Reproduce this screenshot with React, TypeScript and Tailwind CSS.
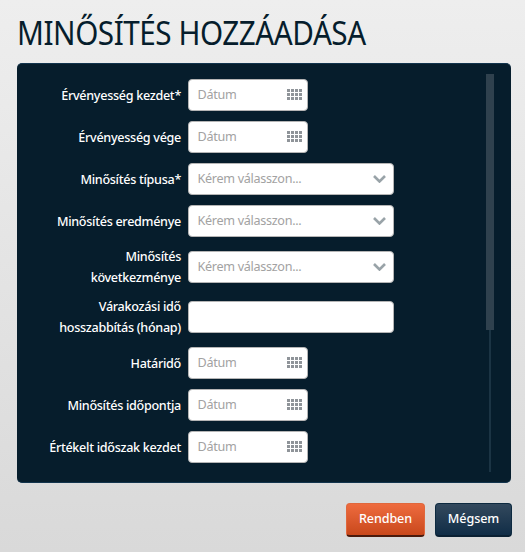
const font = "font-['Noto_Sans','Open_Sans',sans-serif]";

const CalendarGrid = () => (
  <svg width="15" height="12" viewBox="0 0 15 12" className="fill-[#8f9499]">
    {[0, 4, 8].map((y) =>
      [0, 4, 8, 12].map((x) => <rect key={`${x}-${y}`} x={x} y={y} width="3" height="3" />)
    )}
  </svg>
);

const Chevron = () => (
  <svg width="13" height="8" viewBox="0 0 13 8" fill="none" stroke="#99a3a8" strokeWidth="2.6">
    <path d="M1 1 L6.5 6.5 L12 1" />
  </svg>
);

const Row = ({ label, tall, children }: any) => (
  <div className={`flex items-center gap-[7px] ${tall ? "h-[40px]" : "h-[32px]"}`}>
    <label className="w-[164px] shrink-0 text-right text-[12.6px] leading-[21px] font-medium tracking-[-0.3px] text-white">
      {label}
    </label>
    {children}
  </div>
);

const DateField = () => (
  <div className="flex h-[32px] w-[120px] items-center justify-between rounded-[4px] border border-[#b5b5b5] bg-white pl-[8.5px] pr-[5px] text-[12.6px] tracking-[-0.3px] text-[#a2a2a2]">
    Dátum
    <CalendarGrid />
  </div>
);

const SelectField = () => (
  <div className="flex h-[32px] w-[206px] items-center justify-between rounded-[4px] border border-[#b5b5b5] bg-white pl-[8.5px] pr-[7px] text-[12.6px] tracking-[-0.3px] text-[#a2a2a2]">
    Kérem válasszon...
    <Chevron />
  </div>
);

export default function App() {
  return (
    <div className={`${font} h-[552px] w-[525px] overflow-hidden bg-linear-to-b from-[#eeeeee] to-[#d9d9d9]`}>
      <h1 className="origin-left scale-x-[0.898] pt-[13px] pl-[19px] text-[33px] leading-[40px] font-normal tracking-[-0.5px] whitespace-nowrap text-[#061d2c]">
        MINŐSÍTÉS HOZZÁADÁSA
      </h1>

      <div className="relative mx-[17px] mt-[10px] h-[420px] w-[494px] overflow-hidden rounded-[5px] border-t border-b border-[#12344d] bg-[#061d2c]">
        <div className="flex flex-col gap-[10px] pt-[15px]">
          <Row label="Érvényesség kezdet*"><DateField /></Row>
          <Row label="Érvényesség vége"><DateField /></Row>
          <Row label="Minősítés típusa*"><SelectField /></Row>
          <Row label="Minősítés eredménye"><SelectField /></Row>
          <Row label={<>Minősítés<br />következménye</>} tall><SelectField /></Row>
          <Row label={<>Várakozási idő<br />hosszabbítás (hónap)</>} tall>
            <div className="h-[32px] w-[206px] rounded-[4px] border border-[#b5b5b5] bg-white" />
          </Row>
          <Row label="Határidő"><DateField /></Row>
          <Row label="Minősítés időpontja"><DateField /></Row>
          <Row label="Értékelt időszak kezdet"><DateField /></Row>
        </div>

        <div className="absolute top-[10px] left-[472px] h-[398px] w-[2px] bg-[#1b3444]" />
        <div className="absolute top-[10px] left-[469px] h-[256px] w-[8px] bg-[#2f414e]" />
      </div>

      <div className="mt-[20px] flex justify-end gap-[10px] pr-[13px]">
        <button className="h-[34px] w-[79px] rounded-[4px] border border-[#e0673c] border-b-[2px] border-b-[#4a1a0c] bg-linear-to-b from-[#ee6b3e] to-[#c9481b] text-[12.6px] font-medium tracking-[-0.1px] text-white">
          Rendben
        </button>
        <button className="h-[34px] w-[77px] rounded-[4px] border border-[#0d2a40] border-b-[2px] border-b-[#0a2033] bg-linear-to-b from-[#33495d] to-[#102d47] text-[12.6px] font-medium tracking-[-0.1px] text-white">
          Mégsem
        </button>
      </div>
    </div>
  );
}
